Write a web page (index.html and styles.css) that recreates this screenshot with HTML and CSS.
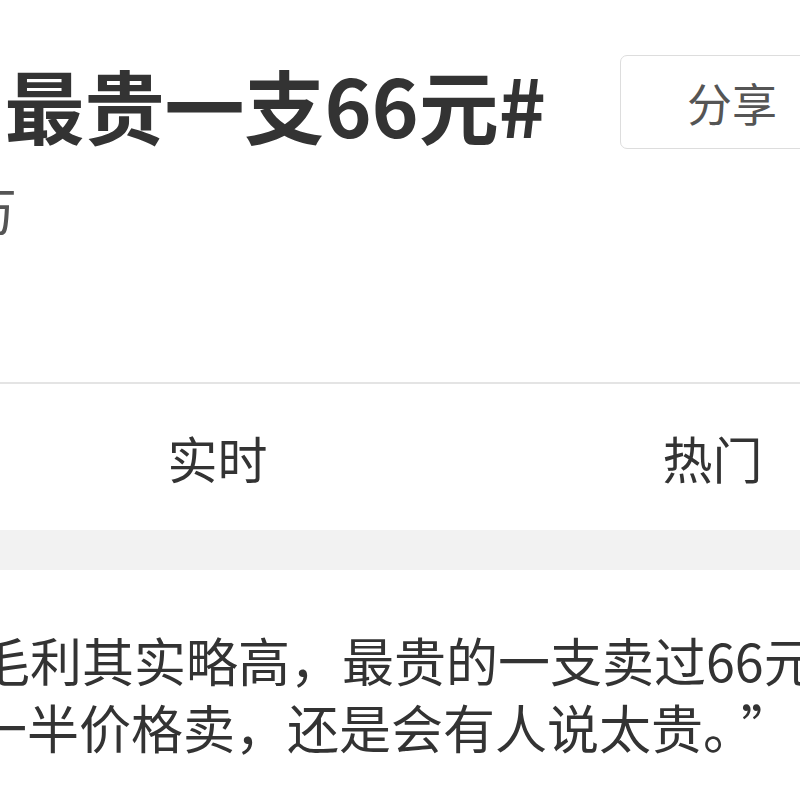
FILE: index.html
```html
<!DOCTYPE html>
<html lang="zh-CN">
<head>
  <meta charset="UTF-8" />
  <meta name="viewport" content="width=device-width, initial-scale=1.0"/>
  <title>#钟薛高最贵一支66元#</title>
  <link rel="stylesheet" href="styles.css">
</head>
<body>
  <div class="page">
    <div class="head">
      <div class="title-box">
        <h1 class="title">#钟薛高最贵一支66元#</h1>
      </div>
      <button class="share">分享</button>
    </div>

    <div class="meta-box">
      <div class="meta">阅读3.2亿 讨论1.6万</div>
    </div>

    <div class="tabs">
      <div class="tab">实时</div>
      <div class="tab">热门</div>
    </div>

    <div class="gap"></div>

    <div class="post">
      <p class="line first">毛利其实略高，最贵的一支卖过66元，</p>
      <p class="line second">一半价格卖，还是会有人说太贵。<span class="quote">”</span></p>
    </div>
  </div>
</body>
</html>
```

FILE: styles.css
```css
body {
  margin: 0;
  background: #ffffff;
  color: #333333;
  font-family: "Noto Sans CJK SC", "Noto Sans", sans-serif;
  overflow: hidden;
}
.page {
  width: 800px;
}
.head {
  display: flex;
  align-items: flex-start;
  padding-top: 55px;
}
.title-box {
  flex: 0 0 546px;
  min-width: 0;
  display: flex;
  justify-content: flex-end;
}
.title {
  flex: 0 0 auto;
  margin: 0;
  font-size: 80px;
  font-weight: bold;
  line-height: 96px;
  white-space: nowrap;
  color: #333333;
}
.share {
  flex: 0 0 auto;
  margin-left: 74px;
  width: 220px;
  height: 94px;
  padding: 0 0 0 66px;
  text-align: left;
  background: #ffffff;
  border: 1px solid #dddddd;
  border-radius: 7px;
  font-family: inherit;
  font-size: 45px;
  color: #555555;
}
.meta-box {
  box-sizing: border-box;
  display: flex;
  justify-content: flex-end;
  width: 17px;
  height: 231px;
  padding-top: 22px;
}
.meta {
  flex: 0 0 auto;
  white-space: nowrap;
  font-size: 52px;
  line-height: 72px;
  color: #555555;
}
.tabs {
  display: flex;
  margin-left: -30px;
  border-top: 2px solid #e4e4e4;
  height: 146px;
}
.tab {
  flex: 0 0 495px;
  display: flex;
  align-items: center;
  justify-content: center;
  font-size: 50px;
  color: #333333;
}
.gap {
  height: 40px;
  background: #f2f2f2;
}
.post {
  padding-top: 56px;
}
.line {
  margin: 0;
  white-space: nowrap;
  font-size: 52px;
  line-height: 67px;
}
.first {
  margin-left: -22px;
}
.second {
  margin-left: -25px;
}
.quote {
  margin-left: 12px;
}
```
